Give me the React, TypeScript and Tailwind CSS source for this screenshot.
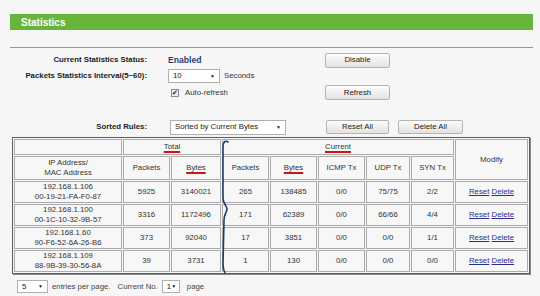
import React from 'react';

const rows = [
  { ip: '192.168.1.106', mac: '00-19-21-FA-F0-87', tp: '5925', tb: '3140021', cp: '265', cb: '138485', icmp: '0/0', udp: '75/75', syn: '2/2' },
  { ip: '192.168.1.100', mac: '00-1C-10-32-9B-57', tp: '3316', tb: '1172496', cp: '171', cb: '62389', icmp: '0/0', udp: '66/66', syn: '4/4' },
  { ip: '192.168.1.60', mac: '90-F6-52-6A-26-B6', tp: '373', tb: '92040', cp: '17', cb: '3851', icmp: '0/0', udp: '0/0', syn: '1/1' },
  { ip: '192.168.1.109', mac: '88-9B-39-30-56-8A', tp: '39', tb: '3731', cp: '1', cb: '130', icmp: '0/0', udp: '0/0', syn: '0/0' },
];

const colWidths = [108, 47, 50, 47, 47, 47, 44, 43, 73];

function Button({ label, w = 'w-[65px]', h = 'h-[15px]' }: { label: string; w?: string; h?: string }) {
  return (
    <div
      className={`${w} ${h} flex items-center justify-center rounded-[2px] border border-[#b4b4b4] bg-gradient-to-b from-[#fdfdfd] to-[#e2e2e2] text-[7.8px] text-[#222]`}
    >
      {label}
    </div>
  );
}

function FakeSelect({ value, w, h = 'h-[14px]' }: { value: string; w: string; h?: string }) {
  return (
    <div className={`${w} ${h} flex items-center justify-between border border-[#b0b0b0] bg-white pl-[4px] pr-[4px] text-[7.8px] text-[#222]`}>
      <span>{value}</span>
      <span className="text-[5px] leading-none">▼</span>
    </div>
  );
}

const Mark = ({ children }: { children: React.ReactNode }) => (
  <span className="underline decoration-[#d0101a] decoration-[1.5px] underline-offset-[2px]">{children}</span>
);

const cell = 'border border-[#ababab] bg-[#f7f7f7] text-center align-middle p-0';

export default function App() {
  return (
    <div className="w-[540px] h-[296px] overflow-hidden bg-[#f6f6f6] text-[#333] font-['Liberation_Sans',Arial,sans-serif]">
      <div className="pt-[14px]">
        <div className="ml-[10px] w-[523px] h-[16px] bg-[#67b53b] flex items-center pl-[11px] text-white font-bold text-[10px]">
          Statistics
        </div>
        <div className="ml-[10px] w-[523px] mt-[17px] h-px bg-[#8e9b97]" />

        {/* status */}
        <div className="mt-[4px] h-[16px] flex items-center">
          <div className="w-[147px] text-right font-bold text-[7.8px] text-[#222]">Current Statistics Status:</div>
          <div className="ml-[21px] w-[157px] font-bold text-[8.6px] text-[#1f3f7b]">Enabled</div>
          <Button label="Disable" />
        </div>

        <div className="h-[16px] flex items-center">
          <div className="w-[147px] text-right font-bold text-[7.8px] text-[#222]">Packets Statistics Interval(5~60):</div>
          <div className="ml-[21px] w-[157px] flex items-center">
            <FakeSelect value="10" w="w-[52px]" />
            <span className="ml-[4px] text-[7.8px] text-[#333]">Seconds</span>
          </div>
        </div>

        <div className="h-[17px] flex items-center">
          <div className="w-[147px]" />
          <div className="ml-[21px] w-[157px] flex items-center pl-[3px]">
            <span className="w-[8px] h-[8px] border border-[#8c8c8c] bg-[#eee] flex items-center justify-center text-[7px] leading-none text-[#222]">
              ✔
            </span>
            <span className="ml-[6px] text-[7.8px] text-[#333]">Auto-refresh</span>
          </div>
          <Button label="Refresh" />
        </div>

        {/* sort row */}
        <div className="mt-[18px] h-[16px] flex items-center">
          <div className="w-[147px] text-right font-bold text-[7.8px] text-[#222]">Sorted Rules:</div>
          <div className="ml-[23px] w-[156px]">
            <FakeSelect value="Sorted by Current Bytes" w="w-[116px]" h="h-[15px]" />
          </div>
          <Button label="Reset All" w="w-[63px]" h="h-[14px]" />
          <div className="ml-[9px]">
            <Button label="Delete All" h="h-[14px]" />
          </div>
        </div>

        {/* table */}
        <div className="relative ml-[12px] mt-[2px] w-[518px]">
          <table className="w-[518px] table-fixed border-separate border-spacing-[1px] border border-[#5e5e5e] shadow-[1px_1px_0_#888] text-[7.8px] leading-[10px] text-[#333]">
            <colgroup>
              {colWidths.map((w, i) => (
                <col key={i} style={{ width: w }} />
              ))}
            </colgroup>
            <thead>
              <tr className="h-[16px]">
                <th className={`${cell} font-normal`} />
                <th colSpan={2} className={`${cell} font-normal`}>
                  <Mark>Total</Mark>
                </th>
                <th colSpan={5} className={`${cell} font-normal`}>
                  <Mark>Current</Mark>
                </th>
                <th rowSpan={2} className={`${cell} font-normal`}>
                  Modify
                </th>
              </tr>
              <tr className="h-[24px]">
                <th className={`${cell} font-normal`}>
                  IP Address/
                  <br />
                  MAC Address
                </th>
                <th className={`${cell} font-normal`}>Packets</th>
                <th className={`${cell} font-normal`}>
                  <Mark>Bytes</Mark>
                </th>
                <th className={`${cell} font-normal`}>Packets</th>
                <th className={`${cell} font-normal`}>
                  <Mark>Bytes</Mark>
                </th>
                <th className={`${cell} font-normal`}>ICMP Tx</th>
                <th className={`${cell} font-normal`}>UDP Tx</th>
                <th className={`${cell} font-normal`}>SYN Tx</th>
              </tr>
            </thead>
            <tbody>
              {rows.map((r) => (
                <tr key={r.ip} className="h-[22px]">
                  <td className={cell}>
                    {r.ip}
                    <br />
                    {r.mac}
                  </td>
                  <td className={cell}>{r.tp}</td>
                  <td className={cell}>{r.tb}</td>
                  <td className={cell}>{r.cp}</td>
                  <td className={cell}>{r.cb}</td>
                  <td className={cell}>{r.icmp}</td>
                  <td className={cell}>{r.udp}</td>
                  <td className={cell}>{r.syn}</td>
                  <td className={cell}>
                    <span className="text-[#2e2e91] underline">Reset</span>{' '}
                    <span className="text-[#2e2e91] underline">Delete</span>
                  </td>
                </tr>
              ))}
            </tbody>
          </table>

          {/* hand-drawn brace annotation */}
          <svg className="absolute left-[206px] top-[1px] pointer-events-none" width="14" height="136" viewBox="0 0 14 136">
            <path
              d="M10 4 C7 2 5 4 5 9 L5 60 C5 66 9 68 9 71 C9 74 6 76 6 82 L5 126 C5 131 6 133 7 135"
              fill="none"
              stroke="#1c3c6c"
              strokeWidth="1.6"
              strokeLinecap="round"
            />
          </svg>
        </div>

        {/* footer */}
        <div className="mt-[6px] h-[13px] flex items-center text-[7.8px] text-[#444]">
          <div className="ml-[17px]">
            <FakeSelect value="5" w="w-[31px]" h="h-[13px]" />
          </div>
          <span className="ml-[4px]">entries per page.</span>
          <span className="ml-[7px]">Current No.</span>
          <div className="ml-[4px]">
            <FakeSelect value="1" w="w-[18px]" h="h-[13px]" />
          </div>
          <span className="ml-[7px]">page</span>
        </div>
      </div>
    </div>
  );
}
